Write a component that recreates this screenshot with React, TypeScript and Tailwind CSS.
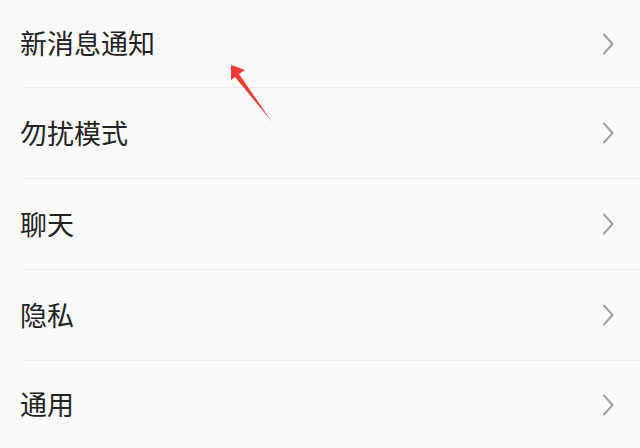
import React from "react";

const rows = [
  { label: "新消息通知", h: "h-[88px]" },
  { label: "勿扰模式", h: "h-[91px]" },
  { label: "聊天", h: "h-[91px]" },
  { label: "隐私", h: "h-[91px]" },
  { label: "通用", h: "h-[87px]" },
];

function Chevron() {
  return (
    <svg width="12" height="22" viewBox="0 0 12 22" className="shrink-0">
      <path d="M2 1.5 L10.5 11 L2 20.5" fill="none" stroke="#a0a0a0" strokeWidth="2" strokeLinecap="round" strokeLinejoin="round" />
    </svg>
  );
}

export default function App() {
  return (
    <div
      className="relative w-[640px] h-[448px] overflow-hidden bg-[#fafafa]"
      style={{ fontFamily: '"Noto Sans CJK SC", "Noto Sans", sans-serif' }}
    >
      <div className="flex flex-col">
        {rows.map((r, i) => (
          <div key={r.label} className={`flex flex-col ${r.h}`}>
            <div className="flex flex-1 items-center pl-[20px] pr-[26px]">
              <span className="flex-1 text-[27px] font-normal leading-none text-[#222222] -translate-y-px">{r.label}</span>
              <Chevron />
            </div>
            {i < rows.length - 1 && <div className="ml-[23px] h-px bg-[#ebebeb]" />}
          </div>
        ))}
      </div>
      <svg className="absolute left-0 top-0" width="640" height="448" viewBox="0 0 640 448">
        <polygon points="231,65 245,70 239,74 272,122 235,77 231,80" fill="#ee3a33" />
      </svg>
    </div>
  );
}
